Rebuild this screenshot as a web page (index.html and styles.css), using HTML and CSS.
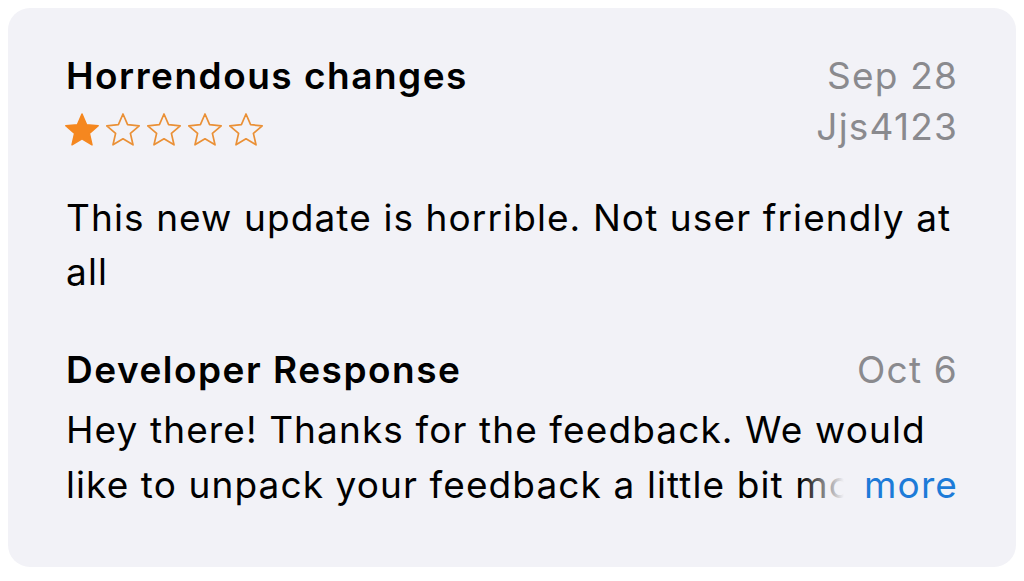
FILE: index.html
```html
<!DOCTYPE html>
<html lang="en">
<head>
  <meta charset="UTF-8" />
  <meta name="viewport" content="width=device-width, initial-scale=1" />
  <title>Review</title>
  <link rel="stylesheet" href="styles.css">
</head>
<body>

  <div class="card">
    <div class="review-head">
      <div class="head-left">
        <h2 class="title">Horrendous changes</h2>
        <div class="stars">
          <svg class="star" viewBox="0 0 34 33"><path class="full" d="M17 1L21.6 11.7 33.2 12.8 24.4 20.4 27 31.8 17 25.8 7 31.8 9.6 20.4 0.8 12.8 12.4 11.7z"/></svg>
          <svg class="star" viewBox="0 0 34 33"><path class="empty" d="M17 1L21.6 11.7 33.2 12.8 24.4 20.4 27 31.8 17 25.8 7 31.8 9.6 20.4 0.8 12.8 12.4 11.7z"/></svg>
          <svg class="star" viewBox="0 0 34 33"><path class="empty" d="M17 1L21.6 11.7 33.2 12.8 24.4 20.4 27 31.8 17 25.8 7 31.8 9.6 20.4 0.8 12.8 12.4 11.7z"/></svg>
          <svg class="star" viewBox="0 0 34 33"><path class="empty" d="M17 1L21.6 11.7 33.2 12.8 24.4 20.4 27 31.8 17 25.8 7 31.8 9.6 20.4 0.8 12.8 12.4 11.7z"/></svg>
          <svg class="star" viewBox="0 0 34 33"><path class="empty" d="M17 1L21.6 11.7 33.2 12.8 24.4 20.4 27 31.8 17 25.8 7 31.8 9.6 20.4 0.8 12.8 12.4 11.7z"/></svg>
        </div>
      </div>
      <div class="head-right">
        <div class="meta">Sep 28</div>
        <div class="meta">Jjs4123</div>
      </div>
    </div>

    <p class="body-text">This new update is horrible. Not user friendly at all</p>

    <div class="response-head">
      <h3 class="title">Developer Response</h3>
      <div class="meta">Oct 6</div>
    </div>

    <div class="response">
      <p class="body-text clamp">Hey there! Thanks for the feedback. We would like to unpack your feedback a little bit more. Please reach out to our support team so we can look into it.</p>
      <span class="more">more</span>
    </div>
  </div>

</body>
</html>
```

FILE: styles.css
```css
body {
  margin: 8px;
  background: #fff;
  font-family: Inter, "Noto Sans", sans-serif;
  color: #000;
}
.card {
  background: #f2f2f7;
  border-radius: 22px;
  height: 559px;
  padding: 42px 58px 0 58px;
  box-sizing: border-box;
}
.review-head {
  display: flex;
  justify-content: space-between;
}
.title {
  margin: 0;
  font-size: 37px;
  font-weight: 600;
  line-height: 51px;
  letter-spacing: 1.5px;
}
.stars {
  display: flex;
  gap: 7px;
  margin-top: 12px;
  margin-left: -1px;
}
.star {
  width: 34px;
  height: 33px;
}
.star .full {
  fill: #f5871f;
  stroke: #f5871f;
  stroke-width: 1.5;
  stroke-linejoin: round;
}
.star .empty {
  fill: none;
  stroke: #ea9036;
  stroke-width: 1.7;
  stroke-linejoin: round;
}
.head-right {
  text-align: right;
}
.meta {
  font-size: 37px;
  line-height: 51px;
  color: #8a8a8e;
  letter-spacing: 1.2px;
}
.body-text {
  margin: 0;
  font-size: 37px;
  line-height: 54px;
  letter-spacing: 1.1px;
}
.card > .body-text {
  margin-top: 39px;
}
.response-head {
  display: flex;
  justify-content: space-between;
  margin-top: 45px;
}
.response {
  position: relative;
  margin-top: 7px;
}
.clamp {
  height: 110px;
  line-height: 55px;
  overflow: hidden;
}
.more {
  position: absolute;
  right: 0;
  bottom: 0;
  font-size: 37px;
  line-height: 55px;
  letter-spacing: 1.1px;
  color: #1d7bd8;
  background: #f2f2f7;
  padding-left: 20px;
}
.more::before {
  content: "";
  position: absolute;
  right: 100%;
  top: 0;
  bottom: 0;
  width: 44px;
  background: linear-gradient(to right, rgba(242, 242, 247, 0), #f2f2f7);
}
```
